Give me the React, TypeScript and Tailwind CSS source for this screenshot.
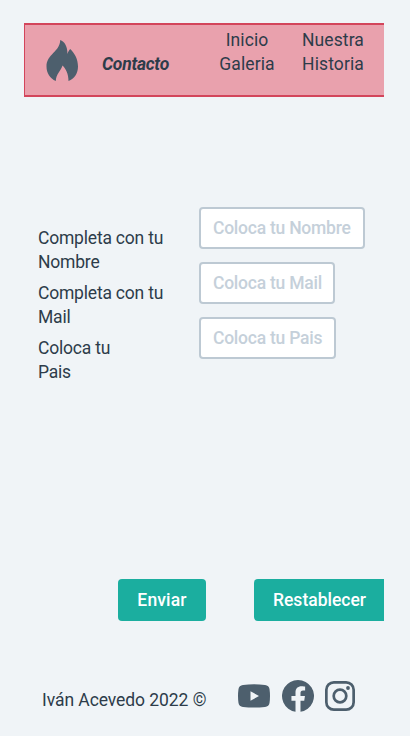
const links = [
  { lines: ['Inicio', 'Galeria'], cls: 'ml-[48px] w-[58px]' },
  { lines: ['Nuestra', 'Historia'], cls: 'ml-[24px] w-[66px]' },
];

const fields = [
  { label: ['Completa con tu', 'Nombre'], hint: 'Coloca tu Nombre', width: 'w-[166px]' },
  { label: ['Completa con tu', 'Mail'], hint: 'Coloca tu Mail', width: 'w-[136px]' },
  { label: ['Coloca tu', 'Pais'], hint: 'Coloca tu Pais', width: 'w-[137px]' },
];

function Flame() {
  return (
    <svg className="ml-[21px] mt-[15px] h-[42px] w-[32px] shrink-0" viewBox="0 0 32 42" fill="#4d5f6d">
      <path d="M14.200 0C18.500 1.500 21.700 6.500 21.400 14C22 11.800 23 10.300 24.200 9C29 13.500 32 19.500 32 26.500C32 33.500 28.500 38.500 22.500 41C22.500 34 19.800 28.500 16.500 25.500C15.200 30.500 10 34 9.800 41C4 38.500 .5 33 .5 26.500C.5 14 14 12 14.200 0Z" />
    </svg>
  );
}

export default function App() {
  return (
    <div className="h-[736px] w-[410px] overflow-hidden bg-[#f0f4f7] pl-6 pr-[26px] pt-[23px] font-['Roboto',sans-serif] text-[17.5px] leading-6 tracking-[-0.2px] text-[#2d3c4a]">
      <nav className="flex h-[74px] border-y-2 border-l border-[#d3455b] bg-[#e9a1ad]">
        <Flame />
        <a className="ml-[24px] mt-[27px] w-[68px] whitespace-nowrap font-bold italic tracking-[-0.25px]">Contacto</a>
        {links.map((link) => (
          <a key={link.lines[0]} className={`mt-[3px] text-center whitespace-nowrap tracking-[0.1px] ${link.cls}`}>
            {link.lines[0]}<br />{link.lines[1]}
          </a>
        ))}
      </nav>

      <form className="mt-[110px]">
        <div className="flex h-[372px] flex-col gap-[13px]">
          {fields.map((field) => (
            <div key={field.hint} className="flex h-[42px] shrink-0">
              <label className="ml-[14px] mt-[19px] w-[161px] shrink-0 whitespace-nowrap">
                {field.label[0]}<br />{field.label[1]}
              </label>
              <input
                className={`h-[42px] rounded border-2 border-[#bdc9d3] bg-white pl-3 pr-1 font-medium tracking-[-0.24px] placeholder:text-[#c5d0da] placeholder:opacity-100 ${field.width}`}
                placeholder={field.hint}
              />
            </div>
          ))}
        </div>
        <div className="flex gap-12 pl-[94px] text-white">
          <button type="button" className="h-[42px] w-[88px] rounded bg-[#1bae9f] font-medium tracking-[0.15px]">Enviar</button>
          <button type="button" className="h-[42px] w-[130px] rounded-l bg-[#1bae9f] pl-[1px] font-medium tracking-[0px]">Restablecer</button>
        </div>
      </form>

      <footer className="mt-[59px] flex h-8 items-center pl-[18px]">
        <p className="mt-[8px] w-[196px] whitespace-nowrap tracking-[-0.07px]">Iván Acevedo 2022 ©</p>
        <svg className="h-6 w-8" viewBox="0 0 32 24" fill="#4d5f6d">
          <path fillRule="evenodd" d="M5 1Q16 -.5 27 1Q31 1.500 31.500 5Q32.500 12 31.500 19Q31 22.500 27 23Q16 24 5 23Q1 22.500 .5 19Q-.5 12 .5 5Q1 1.500 5 1ZM12.500 7.300V16.700L21 12Z" />
        </svg>
        <svg className="ml-3 h-8 w-8" viewBox="0 0 32 32" fill="#4d5f6d">
          <path d="M13.500 31.810V20.630H9.440V16H13.500V12.470C13.500 8.460 15.890 6.250 19.540 6.250C21.290 6.250 23.120 6.560 23.120 6.560V10.500H21.110C19.120 10.500 18.500 11.730 18.500 13V16H22.940L22.230 20.630H18.500V31.810A16 16 0 1 0 13.500 31.810Z" />
        </svg>
        <svg className="ml-[11px] h-[30px] w-[30px]" viewBox="0 0 30 30" fill="none" stroke="#4d5f6d">
          <rect x="1.350" y="1.350" width="27.300" height="27.300" rx="7.500" strokeWidth="2.700" />
          <circle cx="15" cy="15" r="6.300" strokeWidth="2.700" />
          <circle cx="23" cy="7" r="1.900" fill="#4d5f6d" stroke="none" />
        </svg>
      </footer>
    </div>
  );
}
